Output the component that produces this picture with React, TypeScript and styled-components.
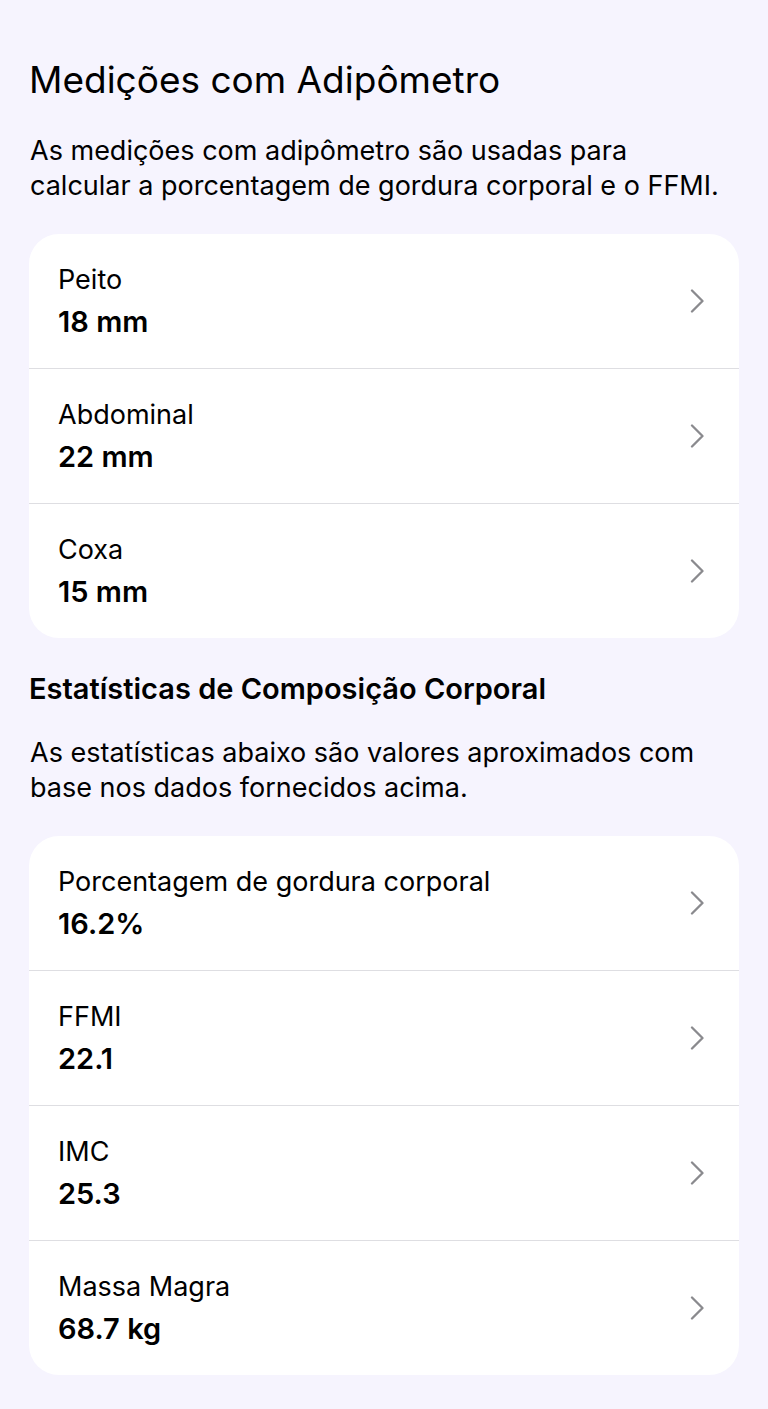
import React from "react";
import styled, { createGlobalStyle } from "styled-components";

const GlobalStyle = createGlobalStyle`
  html, body {
    margin: 0;
    padding: 0;
    background: #f6f4fe;
  }
  body {
    font-family: Inter, "Noto Sans", "Liberation Sans", sans-serif;
    color: #000;
    -webkit-font-smoothing: antialiased;
  }
`;

interface Item {
  label: string;
  value: string;
}

const measurements: Item[] = [
  { label: "Peito", value: "18 mm" },
  { label: "Abdominal", value: "22 mm" },
  { label: "Coxa", value: "15 mm" },
];

const stats: Item[] = [
  { label: "Porcentagem de gordura corporal", value: "16.2%" },
  { label: "FFMI", value: "22.1" },
  { label: "IMC", value: "25.3" },
  { label: "Massa Magra", value: "68.7 kg" },
];

const Chevron = () => (
  <ChevronIcon viewBox="0 0 16 24" width="16" height="24">
    <path
      d="M3 1.5 L13.5 12 L3 22.5"
      fill="none"
      stroke="#8a8a8e"
      strokeWidth="2.3"
      strokeLinecap="round"
      strokeLinejoin="round"
    />
  </ChevronIcon>
);

const Row = ({ label, value }: Item) => (
  <RowStyle>
    <Texts>
      <Label>{label}</Label>
      <Value>{value}</Value>
    </Texts>
    <Chevron />
  </RowStyle>
);

const App = () => {
  return (
    <Page>
      <GlobalStyle />
      <Title>Medições com Adipômetro</Title>
      <Description $top={31}>
        As medições com adipômetro são usadas para calcular a porcentagem de
        gordura corporal e o FFMI.
      </Description>
      <Card>
        {measurements.map((m) => (
          <Row key={m.label} {...m} />
        ))}
      </Card>
      <SectionTitle>Estatísticas de Composição Corporal</SectionTitle>
      <Description $top={28}>
        As estatísticas abaixo são valores aproximados com base nos dados
        fornecidos acima.
      </Description>
      <Card>
        {stats.map((s) => (
          <Row key={s.label} {...s} />
        ))}
      </Card>
    </Page>
  );
};

const Page = styled.div`
  min-height: 1409px;
  box-sizing: border-box;
  padding: 58px 29px 30px;
  display: flex;
  flex-direction: column;
`;
const Title = styled.h1`
  margin: 0;
  font-size: 37px;
  font-weight: 400;
  line-height: 44px;
`;
const SectionTitle = styled.h2`
  margin: 33px 0 0;
  font-size: 29px;
  font-weight: 600;
  line-height: 36px;
`;
const Description = styled.p<{ $top: number }>`
  margin: ${(p) => p.$top}px 0 0;
  padding-left: 1px;
  font-size: 27px;
  line-height: 35px;
  max-width: 704px;
`;
const Card = styled.div`
  margin-top: 31px;
  background: #fff;
  border-radius: 30px;
  overflow: hidden;
`;
const RowStyle = styled.div`
  min-height: 134px;
  display: flex;
  align-items: center;
  justify-content: space-between;
  padding: 0 34px 0 29px;
  & + & {
    border-top: 1px solid #dedee2;
  }
`;
const Texts = styled.div`
  display: flex;
  flex-direction: column;
  gap: 9px;
`;
const Label = styled.div`
  font-size: 27px;
  line-height: 32px;
`;
const Value = styled.div`
  font-size: 29px;
  line-height: 34px;
  font-weight: 600;
`;
const ChevronIcon = styled.svg`
  flex-shrink: 0;
`;

export default App;
